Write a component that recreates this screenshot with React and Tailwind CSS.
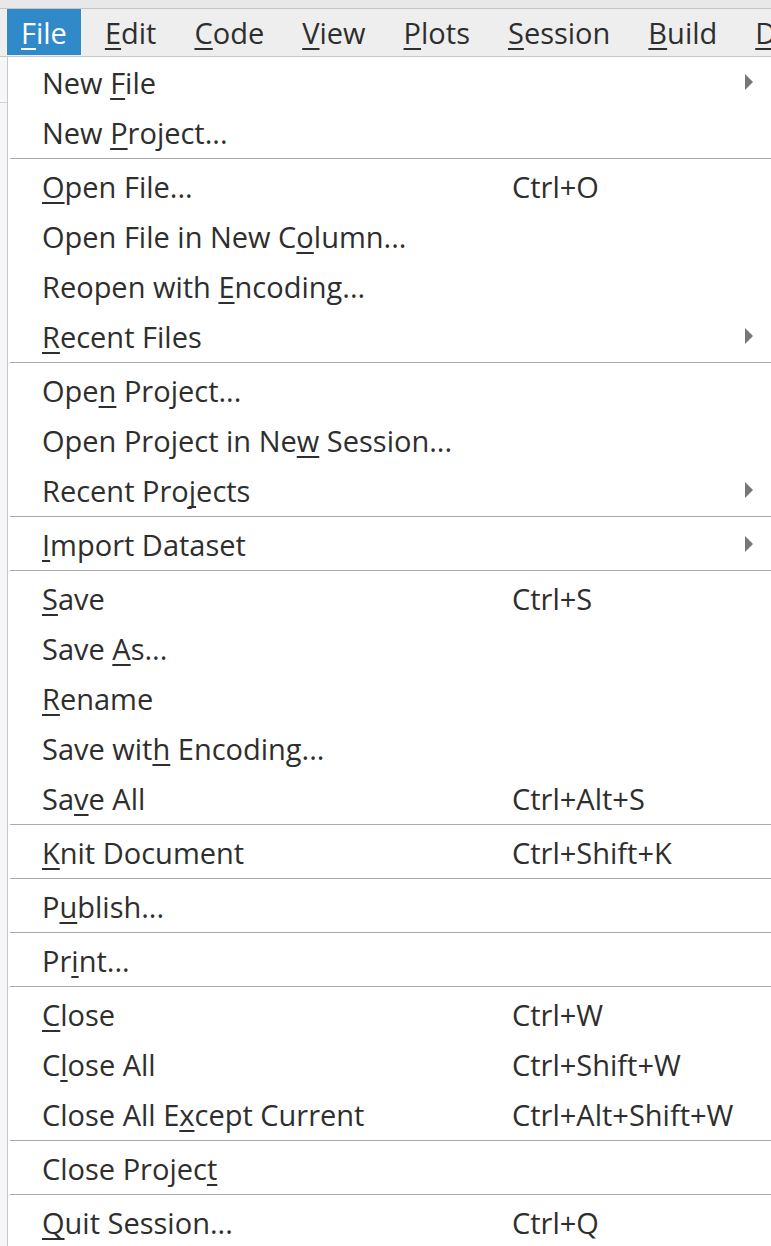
import React from "react";

const menuBar = ["&File", "&Edit", "&Code", "&View", "&Plots", "&Session", "&Build", "&Debug"];

// "-" marks a separator, "&" marks the mnemonic letter
const items = [
  { label: "New &File", sub: true },
  { label: "New &Project..." },
  "-",
  { label: "&Open File...", key: "Ctrl+O" },
  { label: "Open File in New C&olumn..." },
  { label: "Reopen with &Encoding..." },
  { label: "&Recent Files", sub: true },
  "-",
  { label: "Ope&n Project..." },
  { label: "Open Project in Ne&w Session..." },
  { label: "Recent Pro&jects", sub: true },
  "-",
  { label: "&Import Dataset", sub: true },
  "-",
  { label: "&Save", key: "Ctrl+S" },
  { label: "Save &As..." },
  { label: "&Rename" },
  { label: "Save wit&h Encoding..." },
  { label: "Sa&ve All", key: "Ctrl+Alt+S" },
  "-",
  { label: "&Knit Document", key: "Ctrl+Shift+K" },
  "-",
  { label: "P&ublish..." },
  "-",
  { label: "Pr&int..." },
  "-",
  { label: "&Close", key: "Ctrl+W" },
  { label: "C&lose All", key: "Ctrl+Shift+W" },
  { label: "Close All E&xcept Current", key: "Ctrl+Alt+Shift+W" },
  "-",
  { label: "Close Projec&t" },
  "-",
  { label: "&Quit Session...", key: "Ctrl+Q" },
];

function Mnemonic({ text }) {
  const i = text.indexOf("&");
  if (i < 0) return <>{text}</>;
  return (
    <>
      {text.slice(0, i)}
      <span className="underline decoration-[2px] underline-offset-[4px] [text-decoration-skip-ink:none]">
        {text[i + 1]}
      </span>
      {text.slice(i + 2)}
    </>
  );
}

function Arrow() {
  return (
    <svg width="8" height="16" viewBox="0 0 8 16" className="block">
      <polygon points="0,0 8,8 0,16" fill="#777777" />
    </svg>
  );
}

export default function App() {
  return (
    <div
      className="w-[771px] h-[1246px] overflow-hidden bg-white text-[#2e2e2e] text-[29px] leading-none"
      style={{ fontFamily: '"Open Sans", "Noto Sans", sans-serif' }}
    >
      <div className="h-[9px] bg-[#e8e8e8] border-b border-[#c4c4c4]" />
      <div className="h-[48px] bg-[#eeeeee] border-b border-[#c8c8c8] flex items-start pl-[7px] gap-[10px] whitespace-nowrap overflow-hidden">
        {menuBar.map((m, i) => (
          <div
            key={m}
            className={
              "h-[46px] px-[14px] shrink-0 flex items-center " +
              (i === 0 ? "bg-[#3089c8] text-white" : "")
            }
          >
            <Mnemonic text={m} />
          </div>
        ))}
      </div>
      <div className="flex">
        <div className="w-[7px] shrink-0 bg-[#f4f6f8] h-[1200px]">
          <div className="h-[46px] border-b border-[#d2d6d9]" />
        </div>
        <div className="flex-1 border-l border-[#c8c8c8] bg-white">
          {items.map((it, i) =>
            it === "-" ? (
              <div key={i} className="h-[4px] pt-[1px] pl-[2px]">
                <div className="h-px bg-[#ababab]" />
              </div>
            ) : (
              <div key={i} className="h-[50px] flex items-center pl-[34px] pr-[18px] whitespace-nowrap">
                <div className="w-[470px] shrink-0">
                  <Mnemonic text={it.label} />
                </div>
                <div className="flex-1">{it.key}</div>
                {it.sub && <Arrow />}
              </div>
            )
          )}
        </div>
      </div>
    </div>
  );
}
